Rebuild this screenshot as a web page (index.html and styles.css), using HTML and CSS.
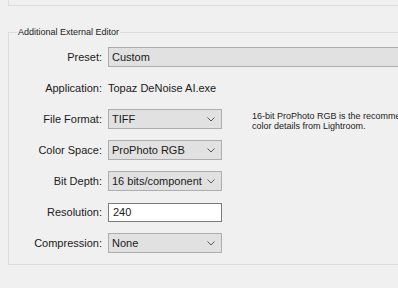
FILE: index.html
```html
<!DOCTYPE html>
<html lang="en">
<head>
    <meta charset="UTF-8">
    <title>External Editing</title>
    <link rel="stylesheet" href="styles.css">
</head>
<body>
    <!-- Bottom edge of the group above -->
    <div class="group-top"></div>

    <fieldset class="group">
        <legend>Additional External Editor</legend>

        <div class="row">
            <span class="label">Preset:</span>
            <div class="combo combo-wide">Custom</div>
        </div>

        <div class="row">
            <span class="label">Application:</span>
            <span class="value">Topaz DeNoise AI.exe</span>
        </div>

        <div class="row row-top">
            <span class="label">File Format:</span>
            <div class="combo">
                TIFF
                <svg class="chevron" width="8" height="5" viewBox="0 0 8 5"><path d="M0.5 0.5 L4 4 L7.5 0.5" fill="none" stroke="#5a5a5a" stroke-width="1"/></svg>
            </div>
            <p class="hint">16-bit ProPhoto RGB is the recommended choice for best preserving<br>color details from Lightroom.</p>
        </div>

        <div class="row">
            <span class="label">Color Space:</span>
            <div class="combo">
                ProPhoto RGB
                <svg class="chevron" width="8" height="5" viewBox="0 0 8 5"><path d="M0.5 0.5 L4 4 L7.5 0.5" fill="none" stroke="#5a5a5a" stroke-width="1"/></svg>
            </div>
        </div>

        <div class="row">
            <span class="label">Bit Depth:</span>
            <div class="combo">
                16 bits/component
                <svg class="chevron" width="8" height="5" viewBox="0 0 8 5"><path d="M0.5 0.5 L4 4 L7.5 0.5" fill="none" stroke="#5a5a5a" stroke-width="1"/></svg>
            </div>
        </div>

        <div class="row">
            <span class="label">Resolution:</span>
            <input class="textbox" type="text" value="240">
        </div>

        <div class="row">
            <span class="label">Compression:</span>
            <div class="combo">
                None
                <svg class="chevron" width="8" height="5" viewBox="0 0 8 5"><path d="M0.5 0.5 L4 4 L7.5 0.5" fill="none" stroke="#5a5a5a" stroke-width="1"/></svg>
            </div>
        </div>
    </fieldset>

    <div class="next-section">Stack With Original</div>
</body>
</html>
```
FILE: styles.css
```css
/* Reset */
* {
    margin: 0;
    padding: 0;
    box-sizing: border-box;
}

body {
    font-family: 'Liberation Sans', Arial, sans-serif;
    font-size: 11px;
    color: #1a1a1a;
    background-color: #f0f0f0;
    width: 398px;
    height: 288px;
    overflow: hidden;
}

.group-top {
    margin-left: 8px;
    width: 420px;
    height: 6px;
    border-left: 1px solid #dcdcdc;
    border-bottom: 1px solid #dcdcdc;
}

.group {
    margin: 20px 0 0 8px;
    width: 420px;
    border: 1px solid #dcdcdc;
    padding: 9px 0 11px 0;
    display: flex;
    flex-direction: column;
    gap: 11px;
}

.group legend {
    font-size: 9px;
    line-height: 12px;
    margin-left: 8px;
    padding: 0 1px;
    color: #222;
}

.row {
    display: flex;
    align-items: center;
    height: 20px;
}

.row-top {
    align-items: flex-start;
}

.label {
    width: 93px;
    text-align: right;
    margin-right: 6px;
    line-height: 20px;
}

.value {
    line-height: 20px;
}

.combo {
    width: 114px;
    height: 20px;
    line-height: 18px;
    padding-left: 3px;
    padding-right: 6px;
    background-color: #e1e1e1;
    border: 1px solid #adadad;
    display: flex;
    align-items: center;
    justify-content: space-between;
}

.combo-wide {
    width: 320px;
}

.chevron {
    flex-shrink: 0;
}

.textbox {
    width: 114px;
    height: 19px;
    font-family: inherit;
    font-size: 11px;
    color: #1a1a1a;
    padding-left: 4px;
    background-color: #fff;
    border: 1px solid #7a7a7a;
    outline: none;
}

.hint {
    margin-left: 30px;
    margin-top: 2px;
    flex-shrink: 0;
    white-space: nowrap;
    font-size: 9px;
    line-height: 10px;
    color: #222;
}

.next-section {
    margin: 23px 0 0 35px;
    line-height: 14px;
}
```
